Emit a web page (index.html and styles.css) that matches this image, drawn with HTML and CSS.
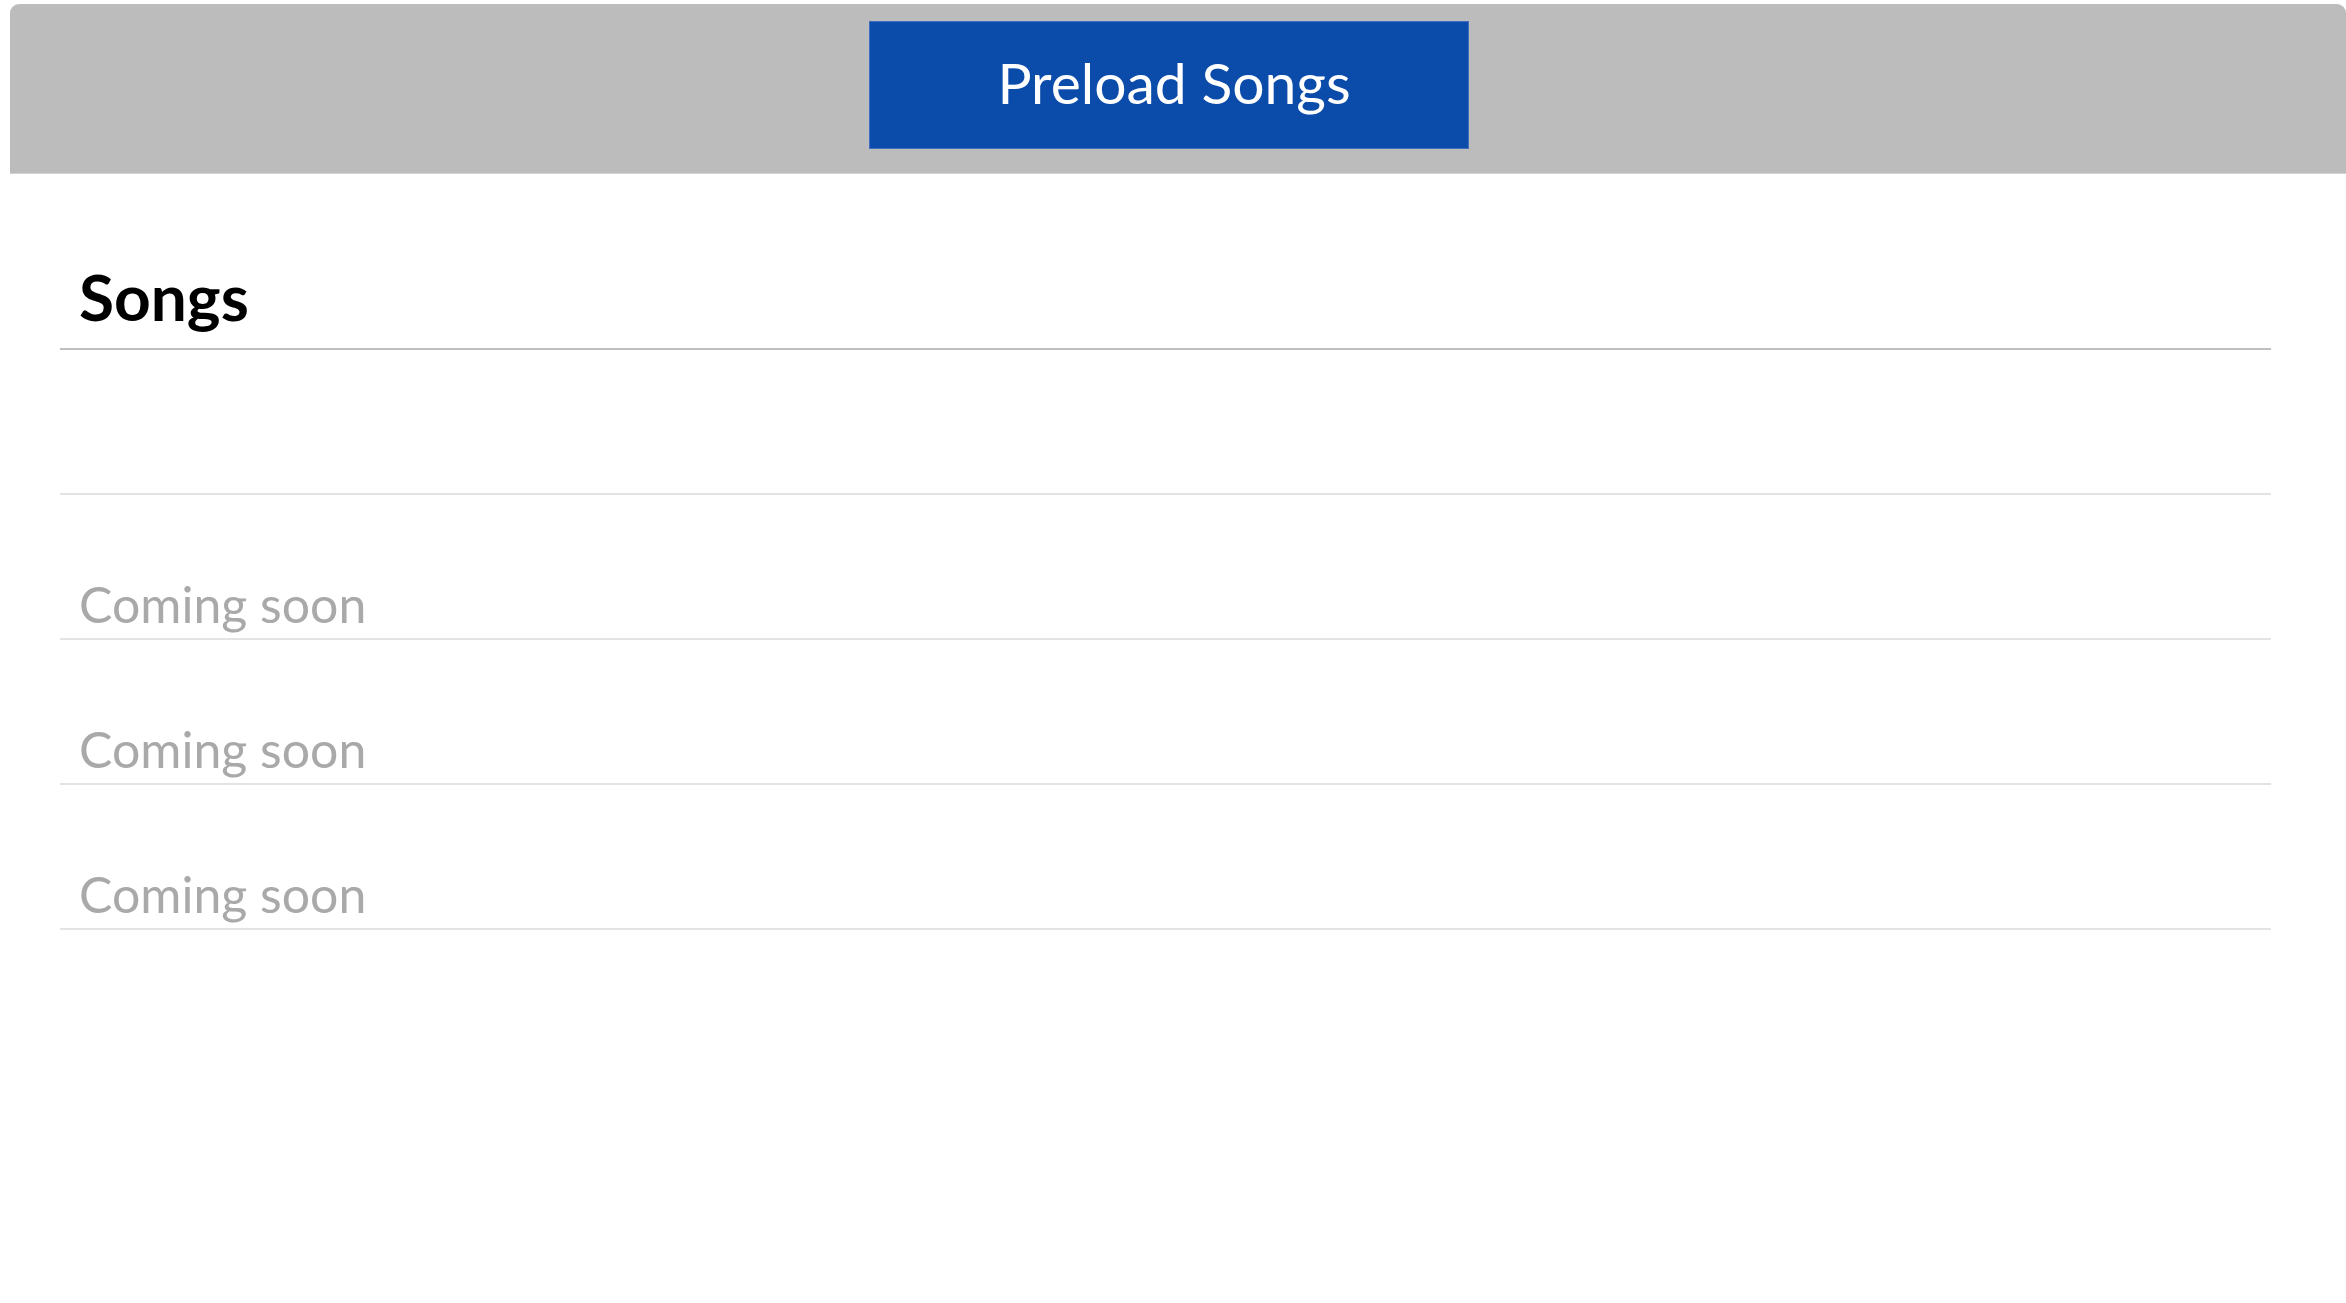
FILE: index.html
```html
<!DOCTYPE html>
<html lang="en">
<head>
<meta charset="utf-8">
<title>Songs</title>
<link rel="stylesheet" href="styles.css">
</head>
<body>
<header class="topbar">
  <button class="preload-btn" type="button">Preload Songs</button>
</header>
<main class="songs">
  <h1 class="songs-title">Songs</h1>
  <ul class="song-list">
    <li class="song-row"></li>
    <li class="song-row"><span class="song-placeholder">Coming soon</span></li>
    <li class="song-row"><span class="song-placeholder">Coming soon</span></li>
    <li class="song-row"><span class="song-placeholder">Coming soon</span></li>
  </ul>
</main>
</body>
</html>
```
FILE: styles.css
```css
html, body {
  margin: 0;
  padding: 0;
  background: #ffffff;
  font-family: Lato, "Open Sans", sans-serif;
}

.topbar {
  margin: 4px 0 0 10px;
  height: 170px;
  box-sizing: border-box;
  background: #bcbcbc;
  border-radius: 9px 9px 0 0;
  border-bottom: 1px solid #d2d2d2;
  display: flex;
  justify-content: center;
  align-items: flex-start;
  padding: 17px 18px 0 0;
}

.preload-btn {
  width: 600px;
  height: 128px;
  box-sizing: border-box;
  background: #0b4ba9;
  border: 1px solid #3f6fbf;
  border-radius: 0;
  color: #ffffff;
  font-family: Lato, "Open Sans", sans-serif;
  font-size: 57px;
  line-height: 1;
  padding: 0 0 6px 10px;
  display: flex;
  align-items: center;
  justify-content: center;
}

.songs {
  margin: 0 0 0 60px;
  width: 2211px;
}

.songs-title {
  margin: 0;
  height: 176px;
  box-sizing: border-box;
  display: flex;
  align-items: flex-end;
  padding: 0 0 19px 19px;
  font-size: 64px;
  line-height: 1;
  font-weight: 700;
  color: #000000;
  border-bottom: 2px solid #bfbfbf;
}

.song-list {
  list-style: none;
  margin: 0;
  padding: 0;
}

.song-row {
  height: 145px;
  box-sizing: border-box;
  border-bottom: 2px solid #e3e3e3;
  display: flex;
  align-items: flex-end;
  padding: 0 0 9px 19px;
}

.song-placeholder {
  font-size: 50px;
  line-height: 1;
  color: #a9a9a9;
}
```
